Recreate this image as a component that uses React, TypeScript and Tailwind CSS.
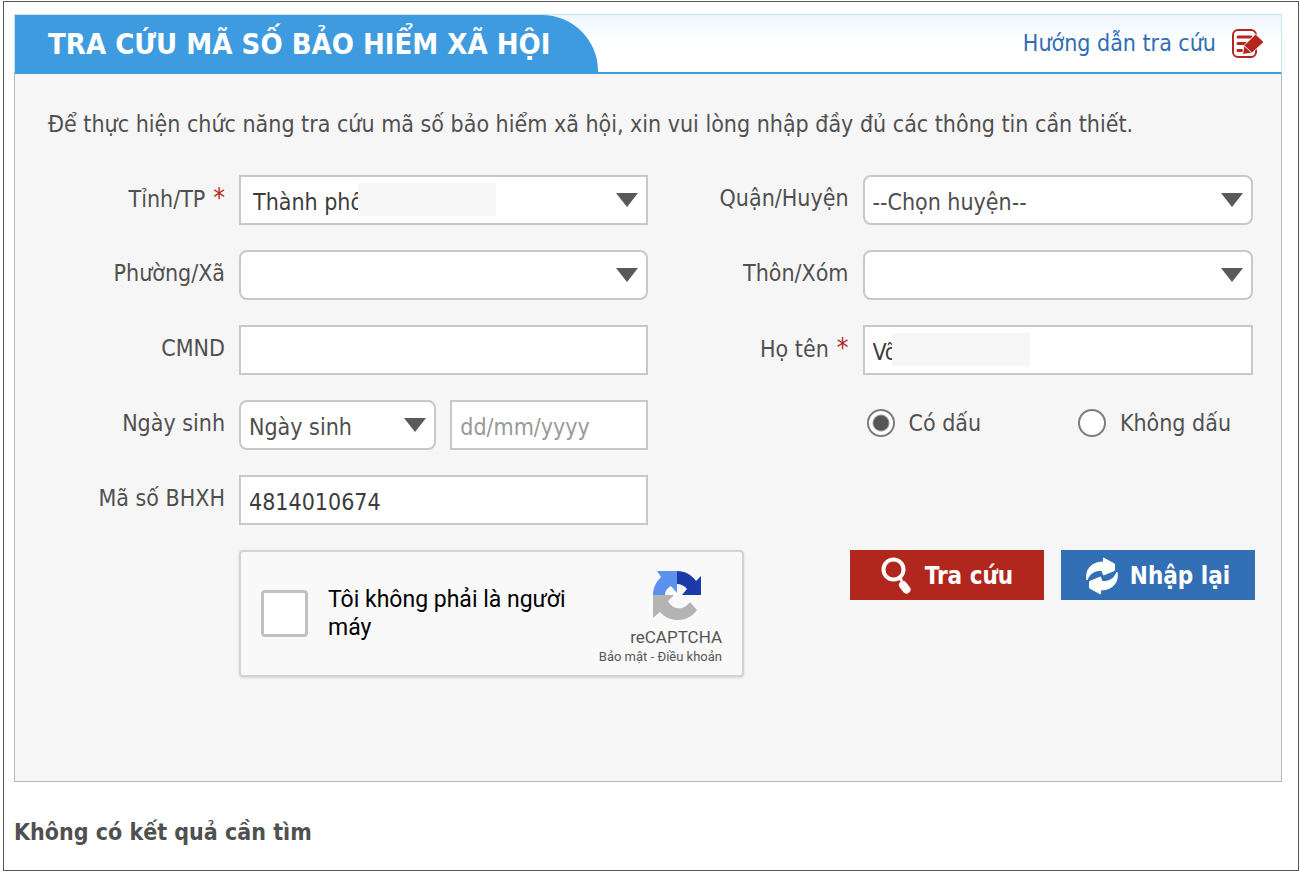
import React, { useState } from "react";

const FIELD =
  "h-[50px] w-full border-2 border-[#c8c8c8] bg-white px-2 pt-1 text-[23px] text-[#3c3c3c] outline-none placeholder:text-[#999]";

interface LabelProps {
  htmlFor: string;
  required?: boolean;
  children: React.ReactNode;
}

function Label({ htmlFor, required, children }: LabelProps) {
  return (
    <label
      htmlFor={htmlFor}
      className="h-[46px] text-right text-[23px] leading-[46px] whitespace-nowrap"
    >
      {children}
      {required && <span className="ml-2 text-[26px] text-[#b5261e]">*</span>}
    </label>
  );
}

interface SelectProps {
  id: string;
  text?: string;
  square?: boolean;
  children?: React.ReactNode;
}

function Select({ id, text = "", square, children }: SelectProps) {
  return (
    <div className="relative min-w-0 flex-1">
      <select
        id={id}
        className={`${FIELD} appearance-none ${
          square ? "pl-3 text-[#2b2b2b]" : "rounded-lg text-[#4d4d4d]"
        }`}
      >
        <option>{text}</option>
      </select>
      {children}
      <svg
        viewBox="0 0 22 14"
        className="pointer-events-none absolute top-[18px] right-2.5 h-3.5 w-[22px]"
      >
        <path d="M0 0h22L11 14z" fill="#58595b" />
      </svg>
    </div>
  );
}

function GuideIcon() {
  return (
    <svg viewBox="0 0 32 30" className="h-[30px] w-8" fill="none">
      <rect x="1" y="1" width="23" height="27" rx="5" stroke="#b5261e" strokeWidth="2" />
      <path
        d="M6 8h13M6 14.500h8M6 21.500h4"
        stroke="#b5261e"
        strokeWidth="3"
        strokeLinecap="round"
      />
      <path
        d="M23.500 5l8.500 8L20 24l-9.500 1.500L12 16.500z"
        fill="#b5261e"
        stroke="#fff"
      />
      <path d="M12.500 17l7 6.500" stroke="#fff" />
    </svg>
  );
}

function SearchIcon() {
  return (
    <svg viewBox="0 0 32 38" className="h-[38px] w-8" fill="none" stroke="#fff">
      <circle cx="12.500" cy="12.500" r="10" strokeWidth="4" />
      <path d="M18 20l3 4" strokeWidth="3" />
      <path d="M22 28l3.500 4.500" strokeWidth="8" strokeLinecap="round" />
    </svg>
  );
}

function ResetIcon() {
  return (
    <svg
      viewBox="0 0 32 38"
      className="h-[38px] w-8"
      fill="#fff"
      stroke="#fff"
      strokeLinejoin="round"
    >
      <path d="M1 23C-1 12 6 5 17.500 5V1L28.500 7v6.500L17.500 18l-1.500-4.500C9 13 4 16 1 23z" />
      <path d="M31 15c2 11-5 18-16.500 18v4L3.500 31v-6.500L14.500 20l1.500 4.500c7 .5 12-2.500 15-9.500z" />
    </svg>
  );
}

function CaptchaLogo() {
  return (
    <svg viewBox="0 0 50 51" className="h-[51px] w-[50px]">
      <path d="M25 1c8 0 15 4 19 10l5-5v19H30l5-6c-2-3-6-5-10-5z" fill="#1c3aa9" />
      <path d="M25 1H5l4 6C4 12 1 18 1 25h12c0-4 2-7 6-9l6 7z" fill="#5b92ef" />
      <path d="M1 25h21l-6 6c4 8 15 11 22 1l7 8c-9 13-28 13-37 2l-7 6z" fill="#b4b4b4" />
    </svg>
  );
}

interface RadioProps {
  label: string;
  checked: boolean;
  onChange: () => void;
}

function Radio({ label, checked, onChange }: RadioProps) {
  return (
    <label className="flex items-center gap-3.5 text-[23px] whitespace-nowrap">
      <input
        type="radio"
        name="accent"
        checked={checked}
        onChange={onChange}
        className="size-7 shrink-0 appearance-none rounded-full border-2 border-[#7d7d7d] bg-white checked:bg-[radial-gradient(circle,#555_7px,#fff_9px)]"
      />
      {label}
    </label>
  );
}

export default function App() {
  const [accented, setAccented] = useState(true);

  return (
    <div className="bg-white pt-px pr-px pb-0.5 pl-[3px] font-['DejaVu_Sans_Condensed','DejaVu_Sans',sans-serif] text-[#505050]">
      <main className="border border-[#555] pt-3 pr-4 pb-5 pl-[10px]">
        <header className="flex h-[60px] items-stretch justify-between border border-b-2 border-[#c5e4f7] border-b-[#3f9bdf] bg-linear-to-b from-[#eff7fd] to-white to-50%">
          <h1 className="w-[583px] rounded-tr-[56px] bg-[#3f9bdf] pl-[33px] text-[29px] leading-[58px] font-bold whitespace-nowrap text-white">
            TRA CỨU MÃ SỐ BẢO HIỂM XÃ HỘI
          </h1>
          <a
            href="#"
            className="flex items-center gap-4 pr-[17px] text-[23px] text-[#2f6db5]"
          >
            Hướng dẫn tra cứu
            <GuideIcon />
          </a>
        </header>

        <form
          onSubmit={(e) => e.preventDefault()}
          className="border border-t-0 border-[#b8b8b8] bg-[#f6f6f6] pt-8 pr-7 pb-[104px] pl-[33px]"
        >
          <p className="text-[23px] leading-9 whitespace-nowrap">
            Để thực hiện chức năng tra cứu mã số bảo hiểm xã hội, xin vui lòng
            nhập đầy đủ các thông tin cần thiết.
          </p>

          <div className="mt-[33px] grid grid-cols-[177px_408fr_187px_390fr] gap-x-3.5 gap-y-[25px]">
            <Label htmlFor="province" required>
              Tỉnh/TP
            </Label>
            <Select id="province" text="Thành phố" square>
              <span className="absolute top-2 left-[119px] h-[33px] w-[138px] bg-[#f6f6f6]" />
            </Select>
            <Label htmlFor="district">Quận/Huyện</Label>
            <Select id="district" text="--Chọn huyện--" />

            <Label htmlFor="ward">Phường/Xã</Label>
            <Select id="ward" />
            <Label htmlFor="hamlet">Thôn/Xóm</Label>
            <Select id="hamlet" />

            <Label htmlFor="idCard">CMND</Label>
            <input id="idCard" className={FIELD} />
            <Label htmlFor="fullName" required>
              Họ tên
            </Label>
            <div className="relative">
              <input id="fullName" defaultValue="Võ" className={FIELD} />
              <span className="absolute top-2 left-[29px] h-[33px] w-[138px] bg-[#f6f6f6]" />
            </div>

            <Label htmlFor="birthType">Ngày sinh</Label>
            <div className="flex gap-3.5">
              <Select id="birthType" text="Ngày sinh" />
              <div className="min-w-0 flex-1">
                <input
                  aria-label="Ngày sinh"
                  placeholder="dd/mm/yyyy"
                  className={FIELD}
                />
              </div>
            </div>
            <div className="col-start-4 flex h-[46px] items-center justify-between pr-[22px] pl-1">
              <Radio
                label="Có dấu"
                checked={accented}
                onChange={() => setAccented(true)}
              />
              <Radio
                label="Không dấu"
                checked={!accented}
                onChange={() => setAccented(false)}
              />
            </div>

            <Label htmlFor="insuranceNo">Mã số BHXH</Label>
            <input
              id="insuranceNo"
              defaultValue="4814010674"
              className={FIELD}
            />
          </div>

          <div className="mt-[25px] -mr-0.5 ml-[191px] flex items-start justify-between">
            <div className="flex h-[127px] w-[505px] justify-between rounded border-2 border-[#d3d3d3] bg-[#f9f9f9] px-5 font-[Roboto,sans-serif] shadow">
              <div className="flex items-center gap-5">
                <input
                  id="robot"
                  type="checkbox"
                  className="size-[47px] shrink-0 appearance-none rounded-sm border-[3px] border-[#c1c1c1] bg-white"
                />
                <label
                  htmlFor="robot"
                  className="w-[250px] text-[23px] leading-7 text-black"
                >
                  Tôi không phải là người máy
                </label>
              </div>
              <div className="flex flex-col items-end pt-[18px] whitespace-nowrap text-[#555]">
                <div className="pr-5">
                  <CaptchaLogo />
                </div>
                <span className="mt-1 text-[17px] leading-6">reCAPTCHA</span>
                <span className="text-[13px] leading-4">
                  <a href="#">Bảo mật</a> - <a href="#">Điều khoản</a>
                </span>
              </div>
            </div>

            <div className="flex gap-[17px]">
              <button
                type="submit"
                className="flex h-[50px] w-[194px] items-center justify-center gap-3 bg-[#b1271e] pt-0.5 text-2xl font-bold whitespace-nowrap text-white"
              >
                <SearchIcon />
                Tra cứu
              </button>
              <button
                type="reset"
                className="flex h-[50px] w-[194px] items-center justify-center gap-3 bg-[#336fb5] pt-0.5 text-2xl font-bold whitespace-nowrap text-white"
              >
                <ResetIcon />
                Nhập lại
              </button>
            </div>
          </div>
        </form>

        <p className="mt-8 text-[23px] leading-9 font-bold">
          Không có kết quả cần tìm
        </p>
      </main>
    </div>
  );
}
